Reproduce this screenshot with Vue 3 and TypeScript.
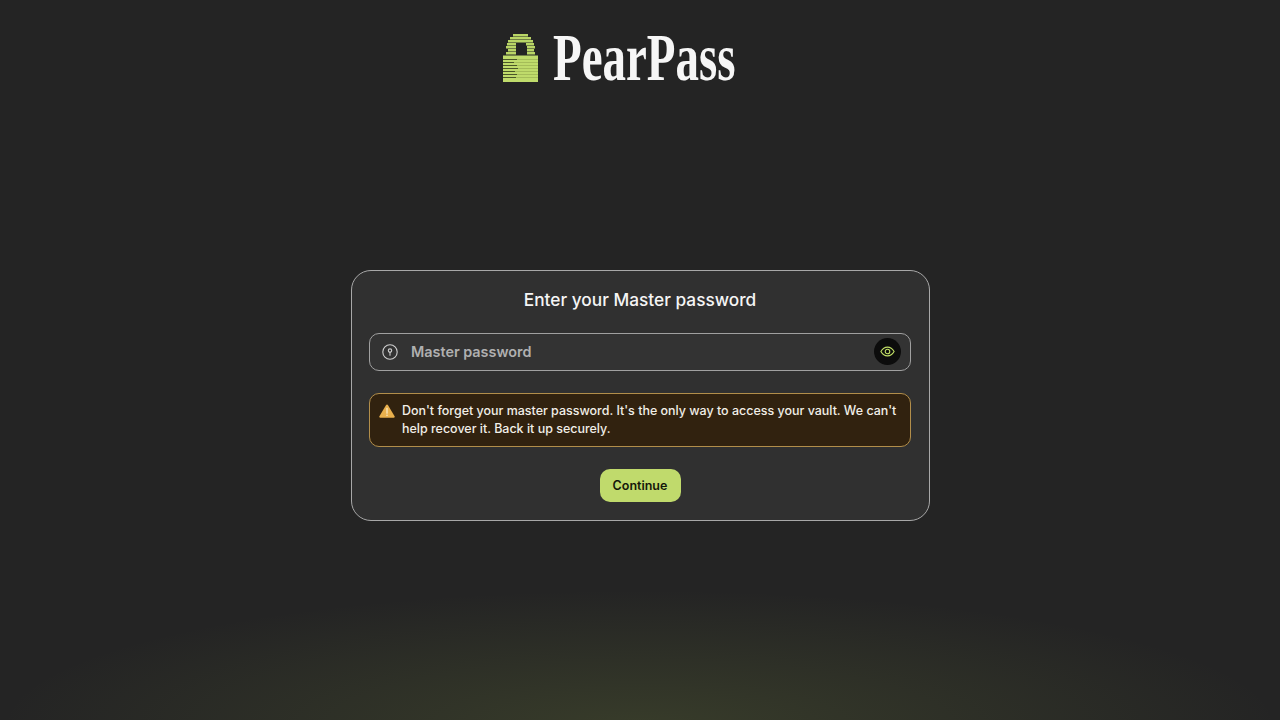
<script setup lang="ts">
import { ref } from "vue";

// shackle rows: [x, y, w] in logo coordinates, split in two when the arch opens
const shackle: number[][] = [
  [10, 0, 15], [7, 3, 21], [5, 6, 25],
  [4, 9, 9], [23, 9, 8],
  [3, 12, 10], [24, 12, 8],
  [5, 15, 8], [24, 15, 7],
  [3, 18, 10], [24, 18, 8],
];

// dark seams across the padlock body: [y, left seam length]
const seams: number[][] = [
  [25, 14], [28, 11], [31, 14], [34, 15], [37, 12], [40, 14], [43, 13],
];

const password = ref("");
</script>

<template>
  <div class="page">
    <header class="header">
      <svg class="lock" viewBox="0 0 35 48" width="35" height="48" aria-hidden="true">
        <rect v-for="(r, i) in shackle" :key="i" :x="r[0]" :y="r[1]" :width="r[2]" height="2.5" fill="#b9d566" />
        <rect x="0" y="21.5" width="35" height="26.5" fill="#bfdb6b" />
        <g v-for="s in seams" :key="s[0]">
          <rect x="0" :y="s[0]" width="35" height="1" fill="#a5bd59" />
          <rect x="0" :y="s[0]" :width="s[1]" height="1" fill="#4a5628" />
        </g>
      </svg>
      <div class="brand"><span class="brand-text">PearPass</span></div>
    </header>

    <main class="main">
      <form class="card" @submit.prevent>
        <h1 class="title">Enter your Master password</h1>

        <div class="field">
          <svg class="key" viewBox="0 0 16 16" width="16" height="16" aria-hidden="true">
            <circle cx="8" cy="8" r="7.2" fill="none" stroke="#cfcfcf" stroke-width="1.1" />
            <circle cx="8" cy="6.6" r="1.7" fill="none" stroke="#cfcfcf" stroke-width="1.1" />
            <path d="M8 8.3v2.9" fill="none" stroke="#cfcfcf" stroke-width="1.1" stroke-linecap="round" />
          </svg>
          <input v-model="password" class="input" type="password" placeholder="Master password" />
          <button class="eye" type="button" aria-label="Show password">
            <svg viewBox="0 0 16 12" width="15" height="11" aria-hidden="true">
              <path d="M.8 6C2.6 2.8 5 1.2 8 1.2s5.4 1.6 7.2 4.8c-1.8 3.2-4.2 4.8-7.2 4.8S2.6 9.2.8 6Z" fill="none" stroke="#c2e066" stroke-width="1.2" />
              <circle cx="8" cy="6" r="2.5" fill="none" stroke="#c2e066" stroke-width="1.2" />
            </svg>
          </button>
        </div>

        <div class="warning">
          <svg class="warn-icon" viewBox="0 0 16 14" width="16" height="14" aria-hidden="true">
            <path d="M8 .6c.4 0 .7.2.9.5l6.7 11.2c.4.7-.1 1.5-.9 1.5H1.3c-.8 0-1.3-.8-.9-1.5L7.1 1.1c.2-.3.5-.5.9-.5Z" fill="#e9b04d" />
            <path d="M8 4.4v4.8" stroke="#fbe9c4" stroke-width="1.3" stroke-linecap="round" />
            <circle cx="8" cy="11.3" r=".8" fill="#fbe9c4" />
          </svg>
          <p class="warn-text">Don't forget your master password. It's the only way to access your vault. We can't help recover it. Back it up securely.</p>
        </div>

        <button class="continue" type="submit">Continue</button>
      </form>
    </main>
  </div>
</template>

<style>
html,
body {
  margin: 0;
  background: #242424;
}
</style>

<style scoped>
.page {
  height: 720px;
  display: flex;
  flex-direction: column;
  box-sizing: border-box;
  overflow: hidden;
  font-family: Inter, "Liberation Sans", sans-serif;
  background:
    radial-gradient(ellipse 640px 135px at 640px 725px, rgba(150, 175, 70, 0.17), rgba(150, 175, 70, 0) 100%),
    #242424;
}

.header {
  display: flex;
  justify-content: center;
  align-items: flex-end;
  gap: 15px;
  padding-top: 33px;
  padding-right: 42px;
  height: 49px;
}

.lock {
  display: block;
}

.brand {
  width: 182px;
  height: 49px;
}

.brand-text {
  display: block;
  width: 265px;
  font-family: "Liberation Serif", serif;
  font-size: 68px;
  font-weight: 700;
  line-height: 49px;
  color: #f6f6f6;
  transform: scaleX(0.69);
  transform-origin: left center;
}

.main {
  flex: 1;
  display: flex;
  align-items: center;
  justify-content: center;
  padding-bottom: 12px;
}

.card {
  width: 579px;
  box-sizing: border-box;
  padding: 18px 17.5px;
  display: flex;
  flex-direction: column;
  align-items: center;
  gap: 22px;
  background: #303030;
  border: 1px solid #a8a8a8;
  border-radius: 20px;
}

.title {
  margin: 0;
  font-size: 17.3px;
  line-height: 22px;
  font-weight: 500;
  color: #f5f5f5;
}

.field {
  align-self: stretch;
  height: 38px;
  box-sizing: border-box;
  display: flex;
  align-items: center;
  padding: 0 9px 0 12px;
  background: #333;
  border: 1px solid #a0a0a0;
  border-radius: 10px;
}

.key {
  flex: none;
}

.input {
  flex: 1;
  min-width: 0;
  margin-left: 13px;
  padding: 0;
  border: 0;
  outline: 0;
  background: transparent;
  font: 600 14.4px Inter, "Liberation Sans", sans-serif;
  color: #eee;
}

.input::placeholder {
  color: #b0b0b0;
  opacity: 1;
}

.eye {
  flex: none;
  width: 27px;
  height: 27px;
  padding: 0;
  display: flex;
  align-items: center;
  justify-content: center;
  background: #0c0c0c;
  border: 0;
  border-radius: 50%;
}

.warning {
  align-self: stretch;
  height: 54px;
  box-sizing: border-box;
  display: flex;
  gap: 7px;
  padding: 8px 12px 8px 9px;
  background: #31220f;
  border: 1px solid #b28e4a;
  border-radius: 10px;
}

.warn-icon {
  flex: none;
  margin-top: 2px;
}

.warn-text {
  margin: 0;
  font-size: 12.47px;
  line-height: 18px;
  font-weight: 500;
  color: #f2efe8;
}

.continue {
  width: 81px;
  height: 33px;
  padding: 0;
  border: 0;
  border-radius: 10px;
  background: #c0da6c;
  font: 600 12.5px Inter, "Liberation Sans", sans-serif;
  color: #14170a;
}
</style>
